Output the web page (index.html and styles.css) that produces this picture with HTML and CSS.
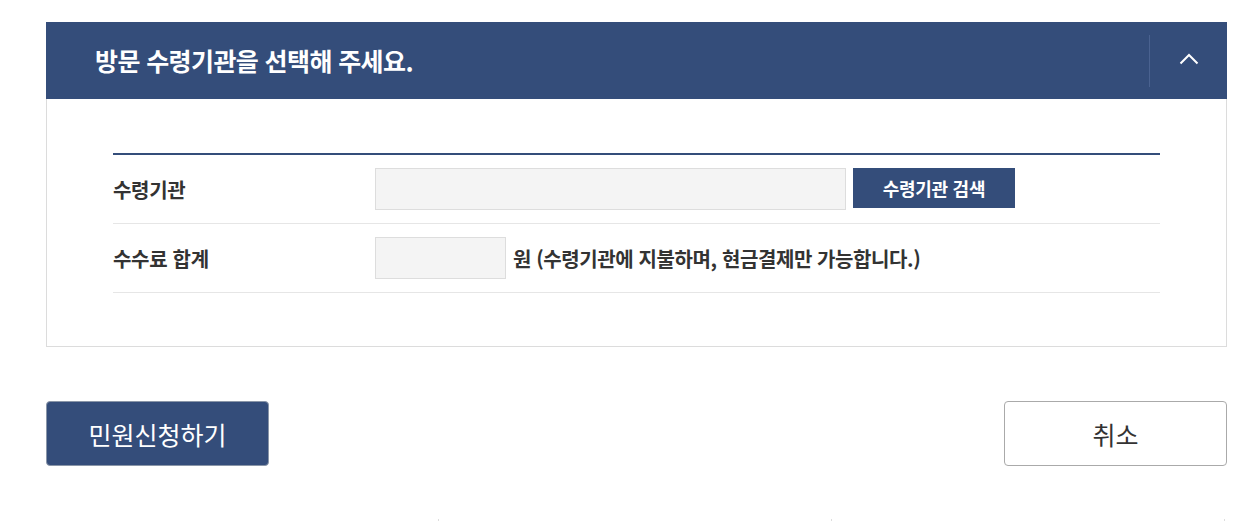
FILE: index.html
```html
<!DOCTYPE html>
<html lang="ko">
<head>
  <meta charset="UTF-8">
  <meta name="viewport" content="width=device-width, initial-scale=1">
  <title>방문 수령기관 선택</title>
  <link rel="stylesheet" href="styles.css">
</head>
<body>

  <div class="wrap">
    <div class="panel">
      <div class="panel-head">
        <h2>방문 수령기관을 선택해 주세요.</h2>
        <button class="toggle" type="button" aria-label="접기">
          <svg width="20" height="12" viewBox="0 0 20 12"><path d="M1.5 10.5 L10 2 L18.5 10.5" fill="none" stroke="#fff" stroke-width="2"/></svg>
        </button>
      </div>
      <div class="panel-body">
        <div class="form-table">
          <div class="row">
            <div class="label">수령기관</div>
            <div class="field">
              <input type="text" class="inp inp-wide">
              <button type="button" class="btn-search">수령기관 검색</button>
            </div>
          </div>
          <div class="row">
            <div class="label">수수료 합계</div>
            <div class="field">
              <input type="text" class="inp inp-short">
              <span class="note">원 (수령기관에 지불하며, 현금결제만 가능합니다.)</span>
            </div>
          </div>
        </div>
      </div>
    </div>

    <div class="actions">
      <button type="button" class="btn btn-primary">민원신청하기</button>
      <button type="button" class="btn btn-cancel">취소</button>
    </div>

    <div class="below">
      <div class="cell"></div>
      <div class="cell"></div>
      <div class="cell"></div>
    </div>
  </div>

</body>
</html>
```

FILE: styles.css
```css
body {
  margin: 0;
  font-family: "Noto Sans CJK KR", "Noto Sans", sans-serif;
  color: #333;
  background: #fff;
}
.wrap {
  padding: 22px 33px 0 46px;
}
.panel-head {
  display: flex;
  align-items: center;
  height: 77px;
  background: #344d7a;
  padding-left: 49px;
}
.panel-head h2 {
  flex: 1;
  margin: 0 0 2px 0;
  color: #fff;
  font-size: 25px;
  font-weight: 700;
  letter-spacing: -0.6px;
}
.toggle {
  width: 78px;
  height: 52px;
  border: none;
  border-left: 1px solid #4a6290;
  background: transparent;
  display: flex;
  align-items: center;
  justify-content: center;
  padding: 0 0 4px 0;
  cursor: pointer;
}
.panel-body {
  border: 1px solid #dcdcdc;
  border-top: none;
  padding: 54px 66px 53px 66px;
}
.form-table {
  border-top: 2px solid #344d7a;
}
.row {
  display: flex;
  align-items: center;
  height: 69px;
  box-sizing: border-box;
  border-bottom: 1px solid #e6e6e6;
}
.label {
  width: 262px;
  font-size: 20px;
  font-weight: 700;
  color: #333;
  letter-spacing: -0.3px;
}
.field {
  display: flex;
  align-items: center;
}
.inp {
  height: 42px;
  box-sizing: border-box;
  border: 1px solid #ddd;
  background: #f4f4f4;
  margin: 0;
}
.inp-wide {
  width: 471px;
}
.inp-short {
  width: 131px;
}
.btn-search {
  margin-left: 7px;
  width: 162px;
  height: 40px;
  border: none;
  background: #344d7a;
  color: #fff;
  font-family: inherit;
  font-size: 18px;
  font-weight: 700;
  letter-spacing: -0.3px;
  margin-top: -2px;
}
.note {
  margin-left: 7px;
  font-size: 20px;
  font-weight: 700;
  color: #333;
  letter-spacing: -0.4px;
}
.actions {
  display: flex;
  justify-content: space-between;
  margin-top: 54px;
}
.btn {
  width: 223px;
  height: 65px;
  border-radius: 4px;
  font-family: inherit;
  font-size: 25px;
  cursor: pointer;
}
.btn-primary {
  background: #344d7a;
  border: 1px solid #8a96a8;
  color: #fff;
}
.btn-cancel {
  background: #fff;
  border: 1px solid #aaa;
  color: #333;
}
.below {
  display: flex;
  margin-top: 53px;
}
.cell {
  width: 392px;
  height: 4px;
  border-right: 1px solid #ddd;
}
```
